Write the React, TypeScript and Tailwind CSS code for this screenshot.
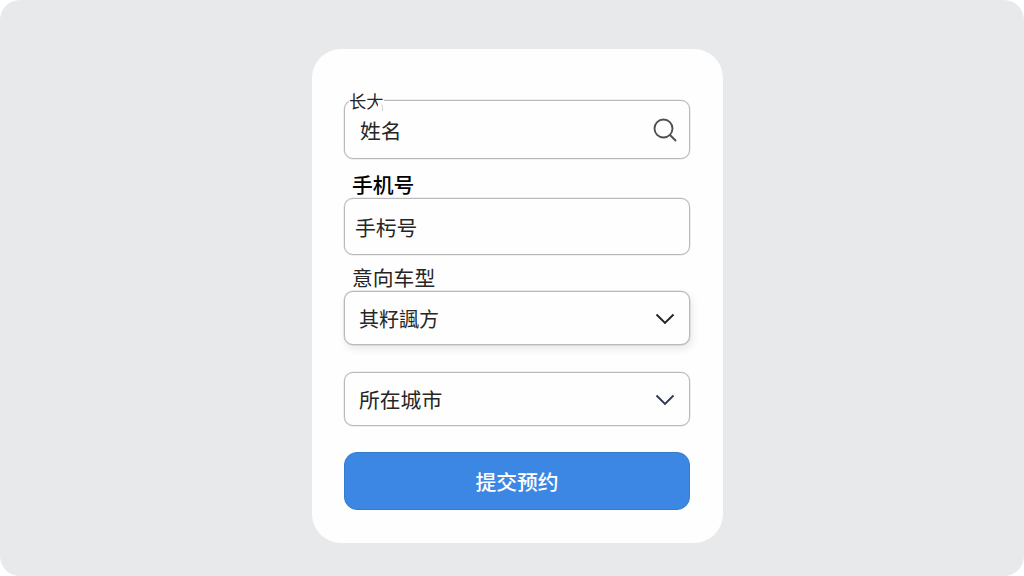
import React from "react";

const field =
  "flex items-center justify-between rounded-[9px] border border-[#b9b9bb] bg-[#fefefe] text-[#262626]";
const halo = "shadow-[0_0_0_0.5px_rgba(0,0,0,0.12)]";

function Chevron({ color }: { color: string }) {
  return (
    <svg className="relative top-px" width="20" height="12" viewBox="0 0 20 12" fill="none" stroke={color} strokeWidth="1.9">
      <path d="M1.5 1.5 10 10 18.5 1.5" />
    </svg>
  );
}

export default function App() {
  return (
    <div className="h-[576px] w-[1024px] bg-white font-['Noto_Sans_CJK_SC',sans-serif]">
      <main className="flex h-full justify-center rounded-[20px] bg-[#e7e9eb] pt-[49px]">
        <form className="ml-[11px] flex h-[494px] w-[411px] flex-col rounded-[29px] bg-[#fefefe] pl-[32px] pr-[33px] pt-[51px] text-[20.8px] leading-[24px]">
          <div className={`${field} ${halo} relative h-[59px] shrink-0 pl-[15px] pr-[12px]`}>
            <span className="absolute -top-[14px] left-[4px] flex h-[27px] bg-[#fefefe] text-[17.3px] leading-[27px]">
              长大
            </span>
            <span className="absolute left-[33px] top-[2px] h-[8px] w-[5px] rounded-tr-[4px] border-r border-[#d4d4d6] bg-[#fefefe]" />
            <span className="relative">姓名</span>
            <svg width="24" height="24" viewBox="0 0 24 24" fill="none" stroke="#505052" strokeWidth="1.9">
              <circle cx="10.5" cy="10.5" r="9" />
              <path d="m17 17 6 6" />
            </svg>
          </div>
          <label className="mt-[13px] h-[26px] shrink-0 pl-[8px] font-medium text-black">手机号</label>
          <div className={`${field} ${halo} h-[57px] shrink-0 pl-[10px]`}>手杇号</div>
          <label className="mt-[10px] h-[26px] shrink-0 pl-[8px] text-[#262626]">意向车型</label>
          <div className={`${field} h-[54px] shrink-0 pl-[14px] pr-[14px] shadow-[0_0_0_0.5px_rgba(0,0,0,0.15),2px_4px_8px_rgba(0,0,0,0.09)]`}>
            <span className="relative top-px text-[20px]">其籽諷方</span>
            <Chevron color="#222222" />
          </div>
          <div className={`${field} ${halo} mt-[27px] h-[54px] shrink-0 pl-[14px] pr-[14px]`}>
            <span>所在城市</span>
            <Chevron color="#2c3b50" />
          </div>
          <button
            type="button"
            className="mt-[26px] h-[58px] shrink-0 rounded-[13px] border border-[#347bcc] bg-[#3c87e3] font-medium text-white"
          >
            提交预约
          </button>
        </form>
      </main>
    </div>
  );
}
